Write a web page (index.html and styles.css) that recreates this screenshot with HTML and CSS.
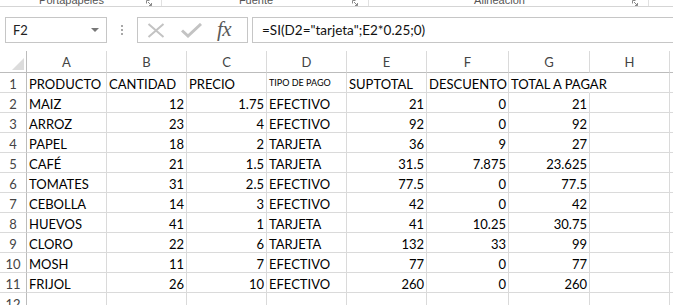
FILE: index.html
```html
<!DOCTYPE html>
<html lang="es">
<head>
<meta charset="utf-8">
<title>Excel</title>
<link rel="stylesheet" href="styles.css">
</head>
<body>
<div class="app">
  <div class="ribbon">
    <div class="group g1"><span class="glabel">Portapapeles</span><span class="launch"><svg width="6" height="6" viewBox="0 0 6 6"><path d="M0.5 0.5h3M0.5 0.5v3M2 2l3.5 3.5M5.5 3v2.5H3" stroke="#8a8a8a" fill="none" stroke-width="1"/></svg></span></div>
    <div class="group g2"><span class="glabel">Fuente</span><span class="launch"><svg width="6" height="6" viewBox="0 0 6 6"><path d="M0.5 0.5h3M0.5 0.5v3M2 2l3.5 3.5M5.5 3v2.5H3" stroke="#8a8a8a" fill="none" stroke-width="1"/></svg></span></div>
    <div class="group g3"><span class="glabel">Alineación</span><span class="launch"><svg width="6" height="6" viewBox="0 0 6 6"><path d="M0.5 0.5h3M0.5 0.5v3M2 2l3.5 3.5M5.5 3v2.5H3" stroke="#8a8a8a" fill="none" stroke-width="1"/></svg></span></div>
    <div class="group g4"></div>
  </div>

  <div class="fbar">
    <div class="namebox"><span class="nbtext">F2</span><span class="nbarrow"></span></div>
    <div class="grip"><i></i><i></i><i></i></div>
    <div class="fbuttons">
      <svg class="ico-x" width="18" height="15" viewBox="0 0 18 15"><path d="M1.5 1l15 13M16.5 1l-15 13" stroke="#c3c3c3" stroke-width="2" fill="none"/></svg>
      <svg class="ico-ok" width="21" height="15" viewBox="0 0 21 15"><path d="M1 7.5l6 5.5L20 1" stroke="#c3c3c3" stroke-width="3" fill="none"/></svg>
      <span class="fx">fx</span>
    </div>
    <div class="finput">=SI(D2="tarjeta";E2*0.25;0)</div>
  </div>

  <div class="sheet">
    <div class="corner"><span class="tri"></span></div>
    <div class="ch">A</div><div class="ch">B</div><div class="ch">C</div><div class="ch">D</div><div class="ch">E</div><div class="ch">F</div><div class="ch">G</div><div class="ch">H</div><div class="ch">I</div>

    <div class="rh">1</div><div class="c">PRODUCTO</div><div class="c">CANTIDAD</div><div class="c">PRECIO</div><div class="c small">TIPO DE PAGO</div><div class="c">SUPTOTAL</div><div class="c">DESCUENTO</div><div class="c over">TOTAL A PAGAR</div><div class="c"></div><div class="c"></div>

    <div class="rh">2</div><div class="c">MAIZ</div><div class="c n">12</div><div class="c n">1.75</div><div class="c">EFECTIVO</div><div class="c n">21</div><div class="c n">0</div><div class="c n">21</div><div class="c"></div><div class="c"></div>

    <div class="rh">3</div><div class="c">ARROZ</div><div class="c n">23</div><div class="c n">4</div><div class="c">EFECTIVO</div><div class="c n">92</div><div class="c n">0</div><div class="c n">92</div><div class="c"></div><div class="c"></div>

    <div class="rh">4</div><div class="c">PAPEL</div><div class="c n">18</div><div class="c n">2</div><div class="c">TARJETA</div><div class="c n">36</div><div class="c n">9</div><div class="c n">27</div><div class="c"></div><div class="c"></div>

    <div class="rh">5</div><div class="c">CAFÉ</div><div class="c n">21</div><div class="c n">1.5</div><div class="c">TARJETA</div><div class="c n">31.5</div><div class="c n">7.875</div><div class="c n">23.625</div><div class="c"></div><div class="c"></div>

    <div class="rh">6</div><div class="c">TOMATES</div><div class="c n">31</div><div class="c n">2.5</div><div class="c">EFECTIVO</div><div class="c n">77.5</div><div class="c n">0</div><div class="c n">77.5</div><div class="c"></div><div class="c"></div>

    <div class="rh">7</div><div class="c">CEBOLLA</div><div class="c n">14</div><div class="c n">3</div><div class="c">EFECTIVO</div><div class="c n">42</div><div class="c n">0</div><div class="c n">42</div><div class="c"></div><div class="c"></div>

    <div class="rh">8</div><div class="c">HUEVOS</div><div class="c n">41</div><div class="c n">1</div><div class="c">TARJETA</div><div class="c n">41</div><div class="c n">10.25</div><div class="c n">30.75</div><div class="c"></div><div class="c"></div>

    <div class="rh">9</div><div class="c">CLORO</div><div class="c n">22</div><div class="c n">6</div><div class="c">TARJETA</div><div class="c n">132</div><div class="c n">33</div><div class="c n">99</div><div class="c"></div><div class="c"></div>

    <div class="rh">10</div><div class="c">MOSH</div><div class="c n">11</div><div class="c n">7</div><div class="c">EFECTIVO</div><div class="c n">77</div><div class="c n">0</div><div class="c n">77</div><div class="c"></div><div class="c"></div>

    <div class="rh">11</div><div class="c">FRIJOL</div><div class="c n">26</div><div class="c n">10</div><div class="c">EFECTIVO</div><div class="c n">260</div><div class="c n">0</div><div class="c n">260</div><div class="c"></div><div class="c"></div>

    <div class="rh">12</div><div class="c"></div><div class="c"></div><div class="c"></div><div class="c"></div><div class="c"></div><div class="c"></div><div class="c"></div><div class="c"></div><div class="c"></div>
  </div>
</div>
</body>
</html>
```

FILE: styles.css
```css
* { box-sizing: border-box; }
html, body { margin: 0; padding: 0; background: #fff; }
body { width: 673px; height: 305px; overflow: hidden; font-family: "Lato", "Liberation Sans", Arial, sans-serif; }
.app { width: 673px; height: 305px; overflow: hidden; }

/* ribbon strip (bottom edge of ribbon) */
.ribbon {
  display: flex;
  height: 7px;
  border-bottom: 1px solid #d5d5d5;
  overflow: hidden;
}
.group {
  display: flex;
  align-items: flex-end;
  height: 6px;
  border-right: 1px solid #e1e1e1;
}
.g1 { width: 162px; }
.g2 { width: 207px; }
.g3 { width: 280px; }
.g4 { flex: 1; border-right: 0; }
.glabel {
  flex: 1;
  text-align: center;
  font-family: "Liberation Sans", Arial, sans-serif;
  font-size: 11px;
  line-height: 11px;
  color: #555;
  white-space: nowrap;
}
.launch {
  width: 18px;
  height: 6px;
  display: flex;
  align-items: flex-start;
  justify-content: flex-start;
  padding-left: 2px;
}
.g1 .launch { padding-left: 3px; }

/* formula bar */
.fbar {
  display: flex;
  margin-top: 10px;
  height: 26px;
  padding-left: 5px;
}
.namebox {
  width: 102px;
  height: 26px;
  border: 1px solid #c6c6c6;
  display: flex;
  align-items: center;
  padding-left: 7px;
  padding-right: 7px;
  font-size: 13px;
  color: #222;
}
.nbtext { flex: 1; }
.nbarrow {
  width: 0; height: 0;
  border-left: 4px solid transparent;
  border-right: 4px solid transparent;
  border-top: 4px solid #777;
  margin-top: -1px;
}
.grip {
  width: 30px;
  display: flex;
  flex-direction: column;
  align-items: center;
  justify-content: center;
  gap: 2px;
}
.grip i { display: block; width: 2px; height: 2px; background: #a8a8a8; }
.fbuttons {
  width: 111px;
  height: 26px;
  border: 1px solid #c6c6c6;
  display: flex;
  align-items: center;
  padding-left: 9px;
}
.ico-x { margin-right: 16px; }
.ico-ok { margin-right: 15px; margin-top: 1px; }
.fx {
  font-family: "Liberation Serif", "Times New Roman", serif;
  font-style: italic;
  font-size: 21px;
  color: #5a5a5a;
  line-height: 20px;
  margin-top: -2px;
  letter-spacing: -0.5px;
}
.finput {
  flex: 1;
  margin-left: 4px;
  height: 26px;
  border: 1px solid #c6c6c6;
  border-right: 0;
  display: flex;
  align-items: center;
  padding-left: 9px;
  font-size: 13.5px;
  color: #111;
  white-space: nowrap;
}

/* sheet grid */
.sheet {
  margin-top: 8px;
  display: grid;
  grid-template-columns: 27px 80px 80px 80px 80px 80px 82px 81px 80px 80px;
  grid-template-rows: 22px;
  grid-auto-rows: 20px;
  font-size: 13px;
}
.corner {
  border-right: 1px solid #bcbcbc;
  border-bottom: 1px solid #bcbcbc;
  position: relative;
}
.tri {
  position: absolute;
  right: 2px;
  bottom: 2px;
  width: 0; height: 0;
  border-left: 12px solid transparent;
  border-bottom: 12px solid #dcdcdc;
}
.ch {
  border-right: 1px solid #dadada;
  border-bottom: 1px solid #bcbcbc;
  display: flex;
  align-items: center;
  justify-content: center;
  color: #444;
  padding-top: 1px;
}
.rh {
  border-right: 1px solid #bcbcbc;
  border-bottom: 1px solid #dadada;
  display: flex;
  align-items: flex-end;
  justify-content: center;
  color: #444;
  line-height: 14px;
  padding-bottom: 1px;
}
.c {
  border-right: 1px solid #dadada;
  border-bottom: 1px solid #dadada;
  display: flex;
  align-items: flex-end;
  padding: 0 2px 1px 2px;
  line-height: 14px;
  color: #000;
  white-space: nowrap;
  min-width: 0;
}
.c.n { justify-content: flex-end; }
.c.small { font-size: 9px; padding-bottom: 2px; }
.c.over { border-right-color: transparent; overflow: visible; }
```
